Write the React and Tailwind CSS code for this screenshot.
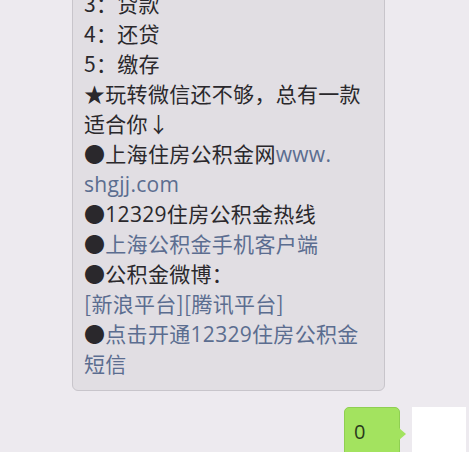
import React from 'react';

const Line = ({ children }) => <div className="h-[30px] whitespace-nowrap leading-[30px]">{children}</div>;
const Link = ({ children }) => <span className="text-[#5b6d90]">{children}</span>;
const Latin = ({ children }) => <span className="font-['Open_Sans','Noto_Sans_CJK_SC',sans-serif]">{children}</span>;

export default function App() {
  return (
    <div className="h-[452px] w-[469px] overflow-hidden bg-[#edeaef] font-['Noto_Sans_CJK_SC','Noto_Sans',sans-serif]">
      <div className="flex pl-[72px]">
        <div className="-mt-[20px] w-[313px] rounded-[6px] border border-[#c8c5cb] bg-[#e1dee3] pb-[12px] pl-[11px] pt-[7px] text-[21px] tracking-[0.3px] text-[#2a282c]">
          <Line>3：贷款</Line>
          <Line>4：还贷</Line>
          <Line>5：缴存</Line>
          <Line>★玩转微信还不够，总有一款</Line>
          <Line>适合你↓</Line>
          <Line>●上海住房公积金网<Link><Latin>www.</Latin></Link></Line>
          <Line><Link><Latin>shgjj.com</Latin></Link></Line>
          <Line>●<Latin>12329</Latin>住房公积金热线</Line>
          <Line>●<Link>上海公积金手机客户端</Link></Line>
          <Line>●公积金微博：</Line>
          <Line><Link>[新浪平台][腾讯平台]</Link></Line>
          <Line>●<Link>点击开通<Latin>12329</Latin>住房公积金</Link></Line>
          <Line><Link>短信</Link></Line>
        </div>
      </div>
      <div className="mt-[16px] flex justify-end pr-[3px]">
        <div className="relative h-[60px] w-[56px] rounded-[5px] border border-[#8fcf52] bg-[#a3e35f] pl-[9px] pt-[9px] font-['Open_Sans',sans-serif] text-[20px] leading-[30px] text-[#2a3a1c]">
          0
          <div className="absolute -right-[7px] top-[20px] h-0 w-0 border-y-[6px] border-l-[7px] border-y-transparent border-l-[#a3e35f]" />
        </div>
        <div className="ml-[12px] h-[60px] w-[54px] bg-white" />
      </div>
    </div>
  );
}
